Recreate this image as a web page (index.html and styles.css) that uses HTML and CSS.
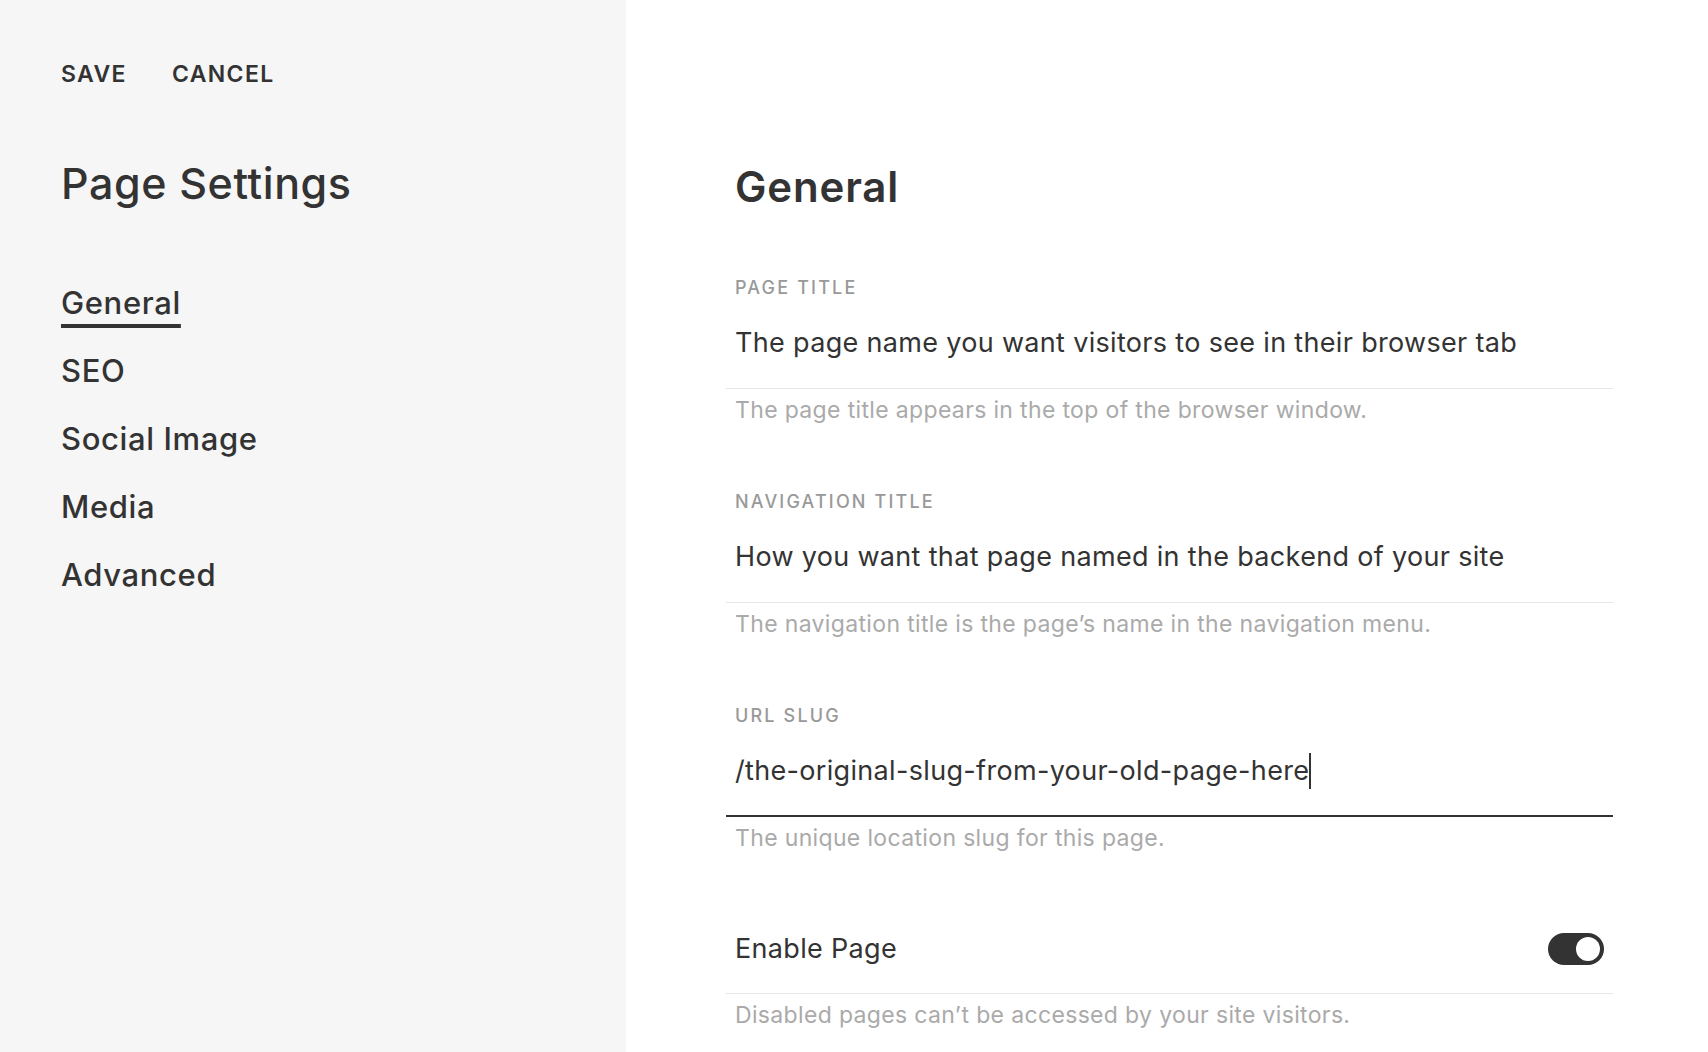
FILE: index.html
```html
<!DOCTYPE html>
<html lang="en">
<head>
<meta charset="UTF-8" />
<meta name="viewport" content="width=device-width, initial-scale=1" />
<title>Page Settings</title>
<link rel="stylesheet" href="styles.css">
</head>
<body>
  <aside class="sidebar">
    <div class="actions">
      <button class="action">SAVE</button>
      <button class="action">CANCEL</button>
    </div>
    <h1 class="sidebar-title">Page Settings</h1>
    <nav class="menu">
      <a class="menu-item active"><span>General</span></a>
      <a class="menu-item"><span>SEO</span></a>
      <a class="menu-item"><span>Social Image</span></a>
      <a class="menu-item"><span>Media</span></a>
      <a class="menu-item"><span>Advanced</span></a>
    </nav>
  </aside>

  <main class="panel">
    <h2 class="panel-title">General</h2>

    <div class="field">
      <div class="field-label">PAGE TITLE</div>
      <div class="field-input">The page name you want visitors to see in their browser tab</div>
      <div class="field-help">The page title appears in the top of the browser window.</div>
    </div>

    <div class="field">
      <div class="field-label">NAVIGATION TITLE</div>
      <div class="field-input">How you want that page named in the backend of your site</div>
      <div class="field-help">The navigation title is the page’s name in the navigation menu.</div>
    </div>

    <div class="field focused">
      <div class="field-label">URL SLUG</div>
      <div class="field-input">/the-original-slug-from-your-old-page-here<span class="caret"></span></div>
      <div class="field-help">The unique location slug for this page.</div>
    </div>

    <div class="field toggle-field">
      <div class="field-input toggle-row">
        <span>Enable Page</span>
        <span class="toggle on"><span class="knob"></span></span>
      </div>
      <div class="field-help">Disabled pages can’t be accessed by your site visitors.</div>
    </div>
  </main>
</body>
</html>
```

FILE: styles.css
```css
body {
  margin: 0;
  display: flex;
  height: 100vh;
  overflow: hidden;
  font-family: Inter, "Noto Sans", sans-serif;
  color: #333;
  background: #fff;
}

/* left column */
.sidebar {
  width: 626px;
  flex-shrink: 0;
  background: #f6f6f6;
  padding-left: 61px;
  box-sizing: border-box;
}
.actions {
  display: flex;
  gap: 45px;
  padding-top: 59px;
}
.action {
  background: none;
  border: none;
  padding: 0;
  font-family: inherit;
  font-size: 23px;
  line-height: 30px;
  font-weight: 600;
  letter-spacing: 0.06em;
  color: #333;
  cursor: pointer;
}
.sidebar-title {
  margin: 69px 0 0;
  font-size: 43px;
  line-height: 50px;
  font-weight: 500;
  letter-spacing: 0.014em;
}
.menu {
  margin-top: 75px;
  display: flex;
  flex-direction: column;
  gap: 28px;
}
.menu-item {
  font-size: 31px;
  line-height: 40px;
  font-weight: 500;
  letter-spacing: 0.02em;
  cursor: pointer;
}
.menu-item.active span {
  text-decoration: underline;
  text-decoration-thickness: 4px;
  text-underline-offset: 10px;
}

/* right column */
.panel {
  padding-left: 100px;
  width: 987px;
  box-sizing: border-box;
}
.panel-title {
  margin: 162px 0 0 9px;
  font-size: 42px;
  line-height: 50px;
  font-weight: 600;
  letter-spacing: 0.02em;
}
.field {
  margin-top: 64px;
}
.field + .field {
  margin-top: 66px;
}
.field-label {
  padding-left: 9px;
  font-size: 18px;
  line-height: 24px;
  font-weight: 500;
  letter-spacing: 0.12em;
  color: #999;
}
.field-input {
  margin-top: 25px;
  padding: 0 0 27px 9px;
  font-size: 27px;
  line-height: 36px;
  letter-spacing: 0.012em;
  border-bottom: 1px solid #e6e6e6;
}
.focused .field-input {
  border-bottom: 2px solid #333;
  padding-bottom: 26px;
}
.caret {
  display: inline-block;
  width: 2px;
  height: 36px;
  background: #333;
  vertical-align: middle;
  margin-top: -4px;
}
.field-help {
  margin-top: 7px;
  padding-left: 9px;
  font-size: 23px;
  line-height: 28px;
  letter-spacing: 0.015em;
  color: #aaa;
}
.field.toggle-field {
  margin-top: 79px;
}
.toggle-row {
  margin-top: 0;
  display: flex;
  justify-content: space-between;
  align-items: center;
  padding-right: 9px;
  padding-bottom: 26px;
}
.toggle {
  width: 56px;
  height: 32px;
  border-radius: 16px;
  background: #333;
  display: flex;
  align-items: center;
  justify-content: flex-end;
  padding: 0 4px;
  box-sizing: border-box;
}
.knob {
  width: 24px;
  height: 24px;
  border-radius: 50%;
  background: #fff;
}
```
